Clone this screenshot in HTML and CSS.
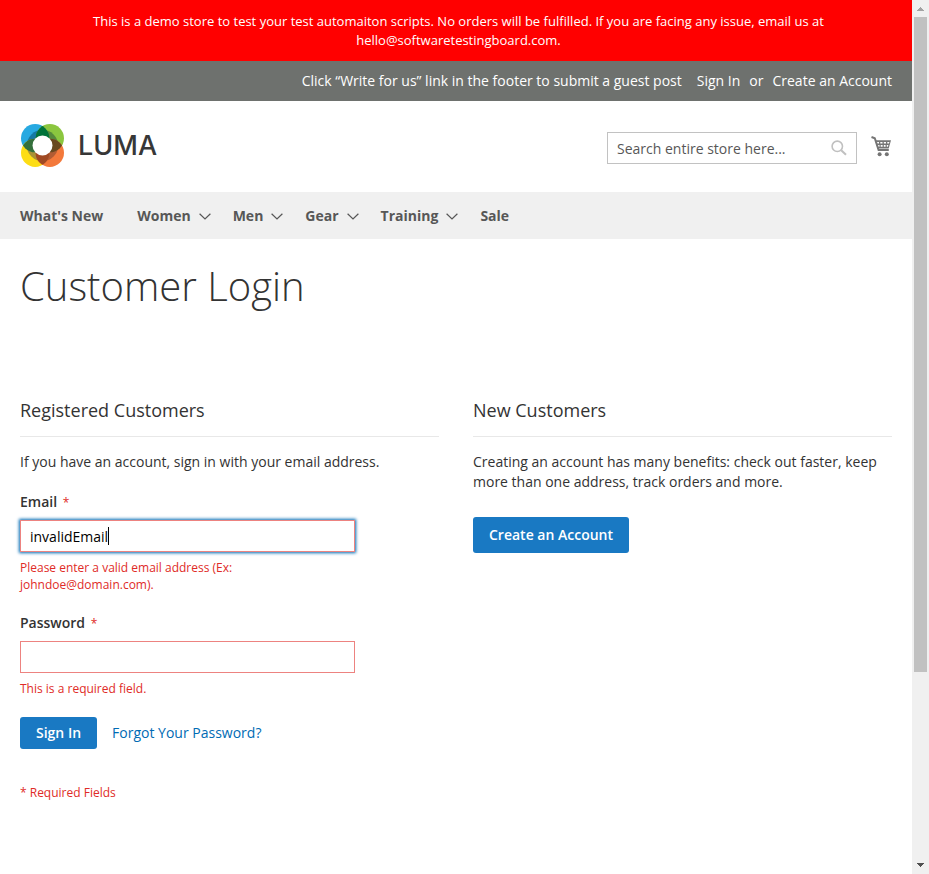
FILE: index.html
```html
<!DOCTYPE html>
<html lang="en">
<head>
<meta charset="utf-8">
<title>Customer Login</title>
<link rel="stylesheet" href="styles.css">
</head>
<body>
<div class="page">
  <div class="demo-notice">This is a demo store to test your test automaiton scripts. No orders will be fulfilled. If you are facing any issue, email us at hello@softwaretestingboard.com.</div>
  <header>
    <div class="panel">
      <span>Click “Write for us” link in the footer to submit a guest post</span>
      <div class="account-links"><a href="#signin">Sign In</a><span>or</span><a class="create-link" href="#create">Create an Account</a></div>
    </div>
    <div class="header-main">
      <a class="logo" href="#home">
        <svg width="43" height="43" viewBox="0 0 44 44" aria-hidden="true">
          <defs>
            <clipPath id="tl"><circle cx="14.5" cy="14.5" r="14.5"/></clipPath>
            <clipPath id="tr"><circle cx="29.5" cy="14.5" r="14.5"/></clipPath>
            <clipPath id="bl"><circle cx="14.5" cy="29.5" r="14.5"/></clipPath>
            <clipPath id="br"><circle cx="29.5" cy="29.5" r="14.5"/></clipPath>
          </defs>
          <circle cx="14.5" cy="14.5" r="14.5" fill="#27a9e1"/>
          <circle cx="29.5" cy="14.5" r="14.5" fill="#8bc63f"/>
          <circle cx="14.5" cy="29.5" r="14.5" fill="#fddd15"/>
          <circle cx="29.5" cy="29.5" r="14.5" fill="#f3793b"/>
          <g clip-path="url(#tl)"><circle cx="22" cy="22" r="16" fill="#1579a3"/></g>
          <g clip-path="url(#tr)"><circle cx="22" cy="22" r="16" fill="#55893c"/></g>
          <g clip-path="url(#bl)"><circle cx="22" cy="22" r="16" fill="#a99336"/></g>
          <g clip-path="url(#br)"><circle cx="22" cy="22" r="16" fill="#b15c34"/></g>
          <g clip-path="url(#tl)"><circle cx="29.5" cy="14.5" r="14.5" fill="#00733a"/></g>
          <g clip-path="url(#tl)"><circle cx="14.5" cy="29.5" r="14.5" fill="#34703c"/></g>
          <g clip-path="url(#br)"><circle cx="29.5" cy="14.5" r="14.5" fill="#68491f"/></g>
          <g clip-path="url(#br)"><circle cx="14.5" cy="29.5" r="14.5" fill="#a04a23"/></g>
          <circle cx="22" cy="22" r="10.2" fill="#fff"/>
        </svg>
        <span>LUMA</span>
      </a>
      <form class="search">
        <input type="text" aria-label="Search" placeholder="Search entire store here...">
        <button type="button" aria-label="Search">
          <svg width="16" height="16" viewBox="0 0 16 16"><circle cx="6.3" cy="6.3" r="5.2" fill="none" stroke="#c0c0c0" stroke-width="1.6"/><path d="M10.2 10.2L15 14.8" stroke="#c0c0c0" stroke-width="2"/></svg>
        </button>
      </form>
      <a class="cart" href="#cart" aria-label="My Cart">
        <svg width="20" height="21" viewBox="0 0 20 21"><path d="M0.5 1L3.8 2.3L7.6 14H17.8" fill="none" stroke="#757575" stroke-width="2"/><path fill="#757575" fill-rule="evenodd" d="M4 4.3H20L17.7 12.4H6.6ZM6 6V7.6H8V6ZM9.3 6V7.6H11.5V6ZM12.8 6V7.6H15V6ZM16.3 6V7.6H18L18.4 6ZM6.7 9V10.7H8.5V9ZM9.7 9V10.7H11.6V9ZM12.8 9V10.7H14.6V9ZM15.8 9V10.7H16.9L17.4 9Z"/><circle cx="8.6" cy="18.3" r="2" fill="#757575"/><circle cx="15.8" cy="18.3" r="2" fill="#757575"/></svg>
      </a>
    </div>
    <nav>
      <a class="first" href="#new">What's New</a>
      <a href="#women">Women<svg class="chevron" viewBox="0 0 12 7"><path d="M0.6 0.8L6 6L11.4 0.8"/></svg></a>
      <a href="#men">Men<svg class="chevron" viewBox="0 0 12 7"><path d="M0.6 0.8L6 6L11.4 0.8"/></svg></a>
      <a href="#gear">Gear<svg class="chevron" viewBox="0 0 12 7"><path d="M0.6 0.8L6 6L11.4 0.8"/></svg></a>
      <a href="#training">Training<svg class="chevron" viewBox="0 0 12 7"><path d="M0.6 0.8L6 6L11.4 0.8"/></svg></a>
      <a href="#sale">Sale</a>
    </nav>
  </header>
  <main>
    <h1>Customer Login</h1>
    <div class="columns">
      <section>
        <h2>Registered Customers</h2>
        <form class="login">
          <p>If you have an account, sign in with your email address.</p>
          <div class="field">
            <label for="email">Email <span class="star">*</span></label>
            <div class="control">
              <input class="focused" id="email" type="text" value="invalidEmail">
              <span class="caret"></span>
            </div>
            <div class="error">Please enter a valid email address (Ex:<br>johndoe@domain.com).</div>
          </div>
          <div class="field">
            <label for="password">Password <span class="star">*</span></label>
            <div class="control"><input id="password" type="password"></div>
            <div class="error">This is a required field.</div>
          </div>
          <div class="actions">
            <button class="primary" type="button">Sign In</button>
            <a href="#forgot">Forgot Your Password?</a>
          </div>
          <div class="required-note">* Required Fields</div>
        </form>
      </section>
      <section>
        <h2>New Customers</h2>
        <p>Creating an account has many benefits: check out faster, keep more than one address, track orders and more.</p>
        <a class="primary large" href="#create">Create an Account</a>
      </section>
    </div>
  </main>
</div>
<div class="scrollbar" aria-hidden="true">
  <svg width="7" height="4" viewBox="0 0 7 4" shape-rendering="crispEdges"><path fill="#a3a3a3" d="M3 0h1v1h1v1h1v1h1v1H0V3h1V2h1V1h1z"/></svg>
  <div class="track"><div class="thumb"></div></div>
  <svg width="7" height="4" viewBox="0 0 7 4" shape-rendering="crispEdges"><path fill="#505050" d="M0 0h7v1H6v1H5v1H4v1H3V3H2V2H1V1H0z"/></svg>
</div>
</body>
</html>
```
FILE: styles.css
```css
* { box-sizing: border-box; }
body {
  margin: 0;
  display: flex;
  height: 100vh;
  overflow: hidden;
  background: #fff;
  color: #333;
  font: 14px/20px "Open Sans", "Noto Sans", sans-serif;
}
a { color: #006bb4; text-decoration: none; }
input, button { font: inherit; }
.page { flex: 1; min-width: 0; }
.demo-notice {
  padding: 12px 40px 11px 45px;
  background: #f00;
  color: #fff;
  font-size: 13px;
  line-height: 19px;
  text-align: center;
}
.panel {
  display: flex;
  justify-content: flex-end;
  gap: 15px;
  padding: 10px 20px;
  background: #6e716e;
  color: #fff;
}
.account-links { display: flex; gap: 9px; }
.panel a { color: #fff; }
.header-main {
  display: flex;
  align-items: flex-start;
  padding: 23px 21px 25px;
}
.logo {
  display: flex;
  align-items: center;
  gap: 14px;
  margin-right: auto;
  color: #373737;
  font: 500 27px/43px Inter, sans-serif;
}
.logo svg { display: block; }
.search {
  position: relative;
  width: 250px;
  margin: 8px 14px 0 0;
}
.search input {
  display: block;
  width: 100%;
  height: 32px;
  padding: 0 35px 0 9px;
  border: 1px solid #c2c2c2;
  background: #fff;
}
.search input::placeholder { color: #575757; opacity: 1; }
.search button {
  position: absolute;
  top: 8px;
  right: 10px;
  padding: 0;
  border: 0;
  background: none;
}
.search button svg, .cart svg { display: block; }
.cart { padding-top: 12px; }
nav {
  display: flex;
  gap: 22px;
  padding: 14px 20px 13px;
  background: #f0f0f0;
}
nav a {
  display: flex;
  align-items: center;
  gap: 8px;
  color: #575757;
  font-weight: 700;
}
nav .first { margin-right: 12px; }
.chevron {
  width: 12px;
  height: 7px;
  fill: none;
  stroke: #575757;
  stroke-width: 1.2;
}
main { padding: 25px 20px 0; }
h1 {
  margin: 0 0 87px;
  font-size: 40px;
  line-height: 44px;
  font-weight: 300;
}
.columns {
  display: grid;
  grid-template-columns: 1fr 1fr;
  gap: 34px;
}
h2 {
  margin: 0 0 15px;
  padding: 5px 0 16px;
  border-bottom: 1px solid #e8e8e8;
  font-size: 18px;
  line-height: 20px;
  font-weight: 400;
}
p { margin: 0 0 20px; }
.field { margin-bottom: 20px; }
.field label { display: block; margin-bottom: 7px; font-weight: 600; }
.star { margin-left: 2px; color: #e02b27; font-size: 12px; font-weight: 400; }
.control { position: relative; width: 80%; }
.control input {
  display: block;
  width: 100%;
  height: 32px;
  padding: 0 9px;
  border: 1px solid #ed8380;
  outline: 0;
  color: #000;
}
.control .focused { box-shadow: 0 0 3px 1px #006bb4; }
.caret {
  position: absolute;
  top: 7px;
  left: 88px;
  width: 1px;
  height: 18px;
  background: #000;
}
.error { margin-top: 7px; color: #e02b27; font-size: 12px; line-height: 17px; }
.actions { display: flex; align-items: center; gap: 15px; }
.primary {
  display: inline-block;
  height: 32px;
  padding: 0 16px;
  border: 0;
  border-radius: 3px;
  background: #1979c3;
  color: #fff;
  font-weight: 600;
  line-height: 32px;
}
.large { height: 36px; margin-top: 5px; line-height: 36px; }
.required-note { margin-top: 34px; color: #e02b27; font-size: 12px; }
.scrollbar {
  display: flex;
  flex-direction: column;
  align-items: center;
  gap: 6px;
  width: 17px;
  padding: 7px 0;
  background: #f0f0f0;
}
.track { flex: 1; width: 13px; }
.thumb { height: 78%; background: #c1c1c1; }
```
